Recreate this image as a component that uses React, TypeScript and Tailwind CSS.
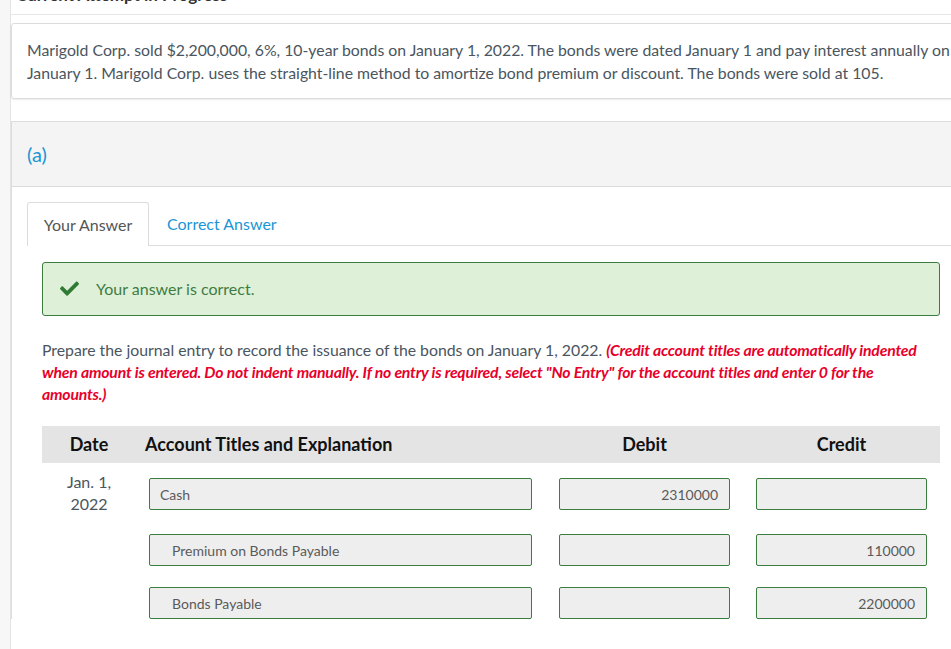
import React from 'react';

const font = { fontFamily: 'Lato, "Open Sans", "Liberation Sans", sans-serif' };

type Row = {
  title: string;
  indent: boolean;
  debit: string;
  credit: string;
  date?: string[];
  gap: string;
};

const rows: Row[] = [
  { title: 'Cash', indent: false, debit: '2310000', credit: '', date: ['Jan. 1,', '2022'], gap: 'mt-[15px]' },
  { title: 'Premium on Bonds Payable', indent: true, debit: '', credit: '110000', gap: 'mt-[24px]' },
  { title: 'Bonds Payable', indent: true, debit: '', credit: '2200000', gap: 'mt-[21px]' },
];

function Field({ value, align, indent }: { value: string; align: 'left' | 'right'; indent?: boolean }) {
  return (
    <div
      className={`h-[32px] bg-[#eeeeee] border border-[#3a7d3f] rounded-[2px] flex items-center text-[14px] text-[#5a5a5a] ${
        align === 'right' ? 'justify-end pr-[11px]' : indent ? 'pl-[22px]' : 'pl-[10px]'
      }`}
    >
      {value}
    </div>
  );
}

export default function App() {
  return (
    <div className="w-[951px] h-[649px] overflow-hidden flex bg-white" style={font}>
      {/* left rail */}
      <div className="w-[11px] shrink-0 bg-[#f7f7f7] border-r border-[#e4e4e4]" />

      <div className="w-[960px] shrink-0">
        {/* cut-off heading */}
        <div className="h-[15px] border-b border-[#e8e8e8] overflow-hidden">
          <div className="-mt-[15px] pl-[5px] text-[17px] font-bold text-[#333] leading-[20px]">
            Current Attempt in Progress
          </div>
        </div>

        {/* problem statement */}
        <div className="mt-[8px] h-[76px] border border-[#dcdcdc] rounded-[3px] shadow-[0_1px_2px_rgba(0,0,0,0.08)] px-[15px] pt-[14px] text-[15.8px] leading-[23px] text-[#4a5560] whitespace-nowrap">
          <p>
            Marigold Corp. sold $2,200,000, 6%, 10-year bonds on January 1, 2022. The bonds were dated January 1 and pay interest annually on
          </p>
          <p>January 1. Marigold Corp. uses the straight-line method to amortize bond premium or discount. The bonds were sold at 105.</p>
        </div>

        {/* part (a) */}
        <div className="mt-[22px] border-l border-t border-[#dcdcdc]">
          <div className="h-[65px] bg-[#f4f4f4] border-b border-[#dcdcdc] flex items-center pl-[15px] text-[20px] text-[#1a95d5]">
            (a)
          </div>

          <div className="pt-[15px] pl-[15px]">
            {/* tabs */}
            <div className="flex items-end border-b border-[#dcdcdc] h-[44px]">
              <div className="h-[44px] w-[122px] -mb-px bg-white border border-b-0 border-[#dcdcdc] rounded-t-[3px] flex items-center justify-center text-[16px] text-[#555]">
                Your Answer
              </div>
              <div className="h-[43px] flex items-center pl-[18px] text-[16px] text-[#1a95d5]">Correct Answer</div>
            </div>

            <div className="pl-[15px] w-[913px]">
              {/* success */}
              <div className="mt-[16px] h-[54px] bg-[#dff0d8] border border-[#3a7d3f] rounded-[3px] flex items-center pl-[17px] text-[16px] text-[#3e7c42]">
                <svg width="19" height="16" viewBox="0 0 512 420" className="mr-[17px] -mt-[2px]">
                  <path
                    fill="#2f7a34"
                    d="M173.9 409.9L7.5 243.5c-10-10-10-26.2 0-36.2l36.2-36.2c10-10 26.2-10 36.2 0L192 283.2 432.1 43.1c10-10 26.2-10 36.2 0l36.2 36.2c10 10 10 26.2 0 36.2L210.1 409.9c-10 10-26.2 10-36.2 0z"
                  />
                </svg>
                Your answer is correct.
              </div>

              {/* instructions */}
              <div className="mt-[23px] text-[15.8px] leading-[22px] text-[#4a5560] pr-[10px]">
                Prepare the journal entry to record the issuance of the bonds on January 1, 2022.{' '}
                <span className="text-[#e8002a] font-bold italic tracking-[-0.2px]">
                  (Credit account titles are automatically indented when amount is entered. Do not indent manually. If no entry is required, select "No Entry" for the account titles and enter 0 for the amounts.)
                </span>
              </div>

              {/* journal table */}
              <div className="mt-[21px] w-[898px]">
                <div className="grid grid-cols-[94px_410px_197px_197px] h-[37px] bg-[#e4e4e4] items-center text-[18px] font-bold text-[#111]">
                  <div className="text-center">Date</div>
                  <div className="pl-[9px]">Account Titles and Explanation</div>
                  <div className="text-center">Debit</div>
                  <div className="text-center">Credit</div>
                </div>

                {rows.map((r, i) => (
                  <div key={i} className={`grid grid-cols-[94px_410px_197px_197px] h-[32px] ${r.gap}`}>
                    <div className="h-[32px] text-center text-[16px] leading-[22px] text-[#4a5560] -mt-[7px]">
                      {r.date && (
                        <>
                          <div>{r.date[0]}</div>
                          <div>{r.date[1]}</div>
                        </>
                      )}
                    </div>
                    <div className="pl-[13px] pr-[14px]">
                      <Field value={r.title} align="left" indent={r.indent} />
                    </div>
                    <div className="px-[13px]">
                      <Field value={r.debit} align="right" />
                    </div>
                    <div className="px-[13px]">
                      <Field value={r.credit} align="right" />
                    </div>
                  </div>
                ))}
              </div>
            </div>
          </div>
        </div>
      </div>
    </div>
  );
}
